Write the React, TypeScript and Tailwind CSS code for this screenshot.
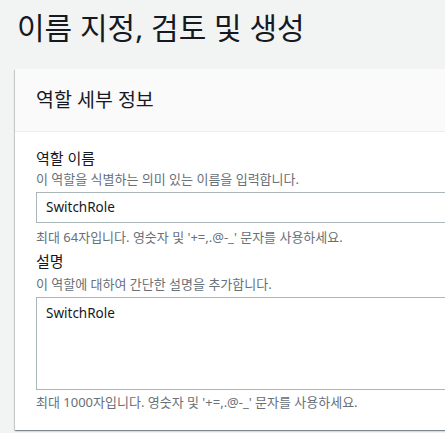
export default function App() {
  const font = { fontFamily: '"Noto Sans", "Noto Sans CJK KR", sans-serif' }

  return (
    <div className="h-[433px] w-[445px] overflow-hidden bg-[#f2f3f3] text-[#16191f]" style={font}>
      <h1 className="pl-[17px] pt-[9px] text-[30px] leading-[38px] font-normal">이름 지정, 검토 및 생성</h1>

      <div className="ml-[15px] mt-[22px] w-[470px] bg-white shadow-[0_1px_1px_0_rgba(0,28,36,0.3),1px_1px_1px_0_rgba(0,28,36,0.15),-1px_1px_1px_0_rgba(0,28,36,0.15)]">
        <div className="flex h-[63px] items-center border-b border-[#eaeded] bg-[#fafafa] px-[21px]">
          <h2 className="text-[19.5px] leading-[22px] font-normal">역할 세부 정보</h2>
        </div>

        <div className="px-[21px] pb-[20px] pt-[16px]">
          <div className="text-[15px] leading-[20px]">역할 이름</div>
          <div className="mt-[3px] text-[13px] leading-[16px] text-[#687078]">
            이 역할을 식별하는 의미 있는 이름을 입력합니다.
          </div>
          <div className="mt-[5px] flex h-[31px] items-center border border-[#aab7b8] px-[9px] text-[13.5px]">
            SwitchRole
          </div>
          <div className="mt-[6px] text-[13px] leading-[16px] text-[#687078]">
            최대 64자입니다. 영숫자 및 '+=,.@-_' 문자를 사용하세요.
          </div>

          <div className="mt-[6px] text-[15px] leading-[20px]">설명</div>
          <div className="mt-[5px] text-[13px] leading-[16px] text-[#687078]">
            이 역할에 대하여 간단한 설명을 추가합니다.
          </div>
          <div className="mt-[5px] h-[93px] border border-[#aab7b8] px-[9px] pt-[4px] text-[13.5px] leading-[22px]">
            SwitchRole
          </div>
          <div className="mt-[4px] text-[13px] leading-[16px] text-[#687078]">
            최대 1000자입니다. 영숫자 및 '+=,.@-_' 문자를 사용하세요.
          </div>
        </div>
      </div>
    </div>
  )
}
